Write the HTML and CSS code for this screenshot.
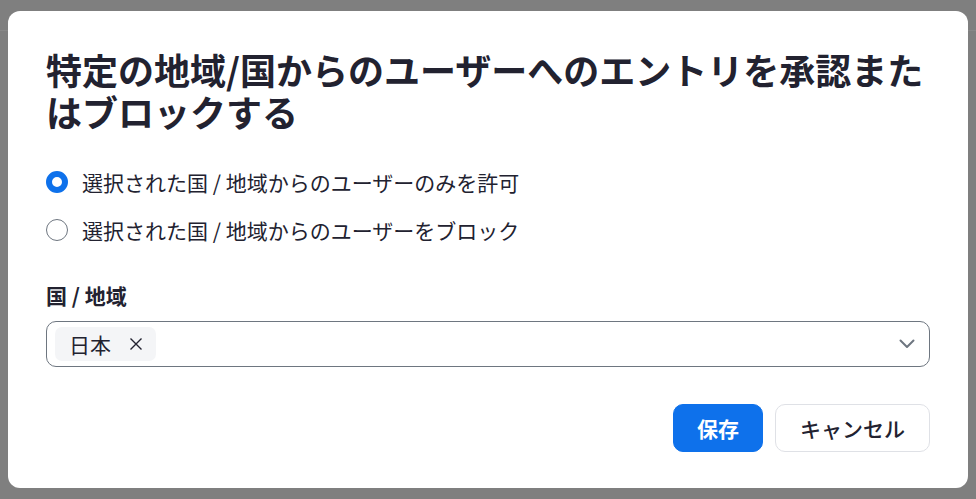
FILE: index.html
```html
<!DOCTYPE html>
<html lang="ja">
<head>
  <meta charset="UTF-8" />
  <meta name="viewport" content="width=device-width, initial-scale=1.0" />
  <title>地域/国からのエントリ</title>
  <link rel="stylesheet" href="styles.css">
</head>
<body>
  <div class="backdrop-line"></div>

  <div class="modal">
    <h1>特定の地域/国からのユーザーへのエントリを承認またはブロックする</h1>

    <div class="options">
      <label class="radio">
        <input type="radio" name="mode" checked />
        <span class="dot"></span>
        選択された国 / 地域からのユーザーのみを許可
      </label>
      <label class="radio">
        <input type="radio" name="mode" />
        <span class="dot"></span>
        選択された国 / 地域からのユーザーをブロック
      </label>
    </div>

    <div class="field-label">国 / 地域</div>

    <div class="select">
      <span class="chip">
        日本
        <svg class="chip-x" width="14" height="14" viewBox="0 0 14 14">
          <path d="M1.5 1.5 L12.5 12.5 M12.5 1.5 L1.5 12.5" stroke="#222230" stroke-width="1.4" fill="none" />
        </svg>
      </span>
      <svg class="chevron" width="16" height="10" viewBox="0 0 16 10">
        <path d="M1.5 1.5 L8 8 L14.5 1.5" stroke="#6e7680" stroke-width="2" fill="none" stroke-linecap="round" stroke-linejoin="round" />
      </svg>
    </div>

    <div class="actions">
      <button class="btn primary">保存</button>
      <button class="btn">キャンセル</button>
    </div>
  </div>
</body>
</html>
```

FILE: styles.css
```css
:root {
  --overlay: #7f7f7f;
  --text: #222230;
  --accent: #0e71eb;
  --border: #6e7680;
  --chip: #f4f5f7;
}

body {
  margin: 0;
  background: var(--overlay);
  font-family: "Noto Sans CJK JP", "Noto Sans", sans-serif;
  color: var(--text);
  height: 499px;
  overflow: hidden;
  position: relative;
}

.backdrop-line {
  position: absolute;
  left: 0;
  right: 0;
  top: 30px;
  height: 1px;
  background: #888;
}

.modal {
  position: relative;
  margin: 11px 8px 0;
  height: 477px;
  box-sizing: border-box;
  background: #fff;
  border-radius: 12px;
  padding: 37px 38px 0;
  display: flex;
  flex-direction: column;
}

h1 {
  margin: 0;
  font-size: 36px;
  line-height: 42px;
  font-weight: 700;
}

.options {
  margin-top: 38px;
  display: flex;
  flex-direction: column;
  gap: 24px;
}

.radio {
  display: flex;
  align-items: center;
  gap: 14px;
  font-size: 21px;
  line-height: 24px;
  cursor: pointer;
}

.radio input {
  display: none;
}

.dot {
  width: 22px;
  height: 22px;
  box-sizing: border-box;
  border: 1px solid var(--border);
  border-radius: 50%;
  flex-shrink: 0;
}

.radio input:checked + .dot {
  border: 6px solid var(--accent);
}

.field-label {
  margin-top: 41px;
  font-size: 21px;
  line-height: 24px;
  font-weight: 700;
}

.select {
  margin-top: 14px;
  height: 46px;
  box-sizing: border-box;
  border: 1px solid var(--border);
  border-radius: 10px;
  display: flex;
  align-items: center;
  justify-content: space-between;
  padding: 0 14px 0 8px;
}

.chip {
  display: flex;
  align-items: center;
  gap: 18px;
  height: 34px;
  padding: 0 13px 0 14px;
  background: var(--chip);
  border-radius: 7px;
  font-size: 21px;
}

.actions {
  margin-top: 37px;
  display: flex;
  justify-content: flex-end;
  gap: 12px;
}

.btn {
  height: 48px;
  padding: 0 24px;
  font-family: inherit;
  font-size: 21px;
  font-weight: 500;
  color: var(--text);
  background: #fff;
  border: 1px solid #dfe1e6;
  border-radius: 10px;
  cursor: pointer;
}

.btn.primary {
  padding: 0 23px;
  background: var(--accent);
  border-color: var(--accent);
  color: #fff;
  font-weight: 700;
}
```
